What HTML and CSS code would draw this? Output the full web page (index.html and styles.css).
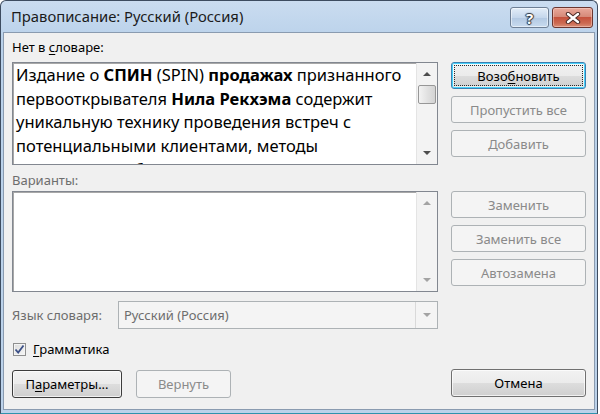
FILE: index.html
```html
<!DOCTYPE html>
<html>
	<head>
		<meta charset="utf-8">
		<title>Правописание: Русский (Россия)</title>
		<link rel="stylesheet" href="styles.css">
	</head>
	<body>
		<div class="window">
			<div class="titlebar">
				<span class="title">Правописание: Русский (Россия)</span>
				<div class="caption_btns">
					<div class="cap cap_help">?</div>
					<div class="cap cap_close">
						<svg width="16" height="12" viewBox="0 0 16 12">
							<path d="M3 2 L13 10 M13 2 L3 10" stroke="#4a2a26" stroke-width="4.4" stroke-linecap="round"/>
							<path d="M3 2 L13 10 M13 2 L3 10" stroke="#ffffff" stroke-width="2.4" stroke-linecap="round"/>
						</svg>
					</div>
				</div>
			</div>
			<div class="dialog">
				<div class="label">Нет в <u>с</u>ловаре:</div>
				<div class="left_col"></div>

				<div class="textbox">
					<div class="text">Издание о <b>СПИН</b> (SPIN) <b>продажах</b> признанного<br>первооткрывателя <b>Нила Рекхэма</b> содержит<br>уникальную технику проведения встреч с<br>потенциальными клиентами, методы<br>правильного общения и другой</div>
					<div class="scroll">
						<div class="arr"><span class="tri_up"></span></div>
						<div class="track"><div class="thumb"></div></div>
						<div class="arr"><span class="tri_down"></span></div>
					</div>
				</div>
				<div class="btn_stack">
					<div class="btn btn_default"><span class="focus">Возо<u>б</u>новить</span></div>
					<div class="btn off">Пропустить все</div>
					<div class="btn off">Добавить</div>
				</div>

				<div class="label dim label_var">Варианты:</div>
				<div class="left_col"></div>

				<div class="listbox">
					<div class="text"></div>
					<div class="scroll">
						<div class="arr"><span class="tri_up off_tri"></span></div>
						<div class="track"></div>
						<div class="arr"><span class="tri_down off_tri"></span></div>
					</div>
				</div>
				<div class="btn_stack">
					<div class="btn off">Заменить</div>
					<div class="btn off">Заменить все</div>
					<div class="btn off">Автозамена</div>
				</div>

				<div class="lang_row">
					<span class="dim lang_label">Язык словаря:</span>
					<div class="combo">
						<span class="combo_text">Русский (Россия)</span>
						<div class="combo_btn"><span class="tri_down off_tri"></span></div>
					</div>
				</div>
				<div class="left_col"></div>

				<div class="check_row">
					<span class="checkbox">
						<svg width="11" height="11" viewBox="0 0 11 11">
							<path d="M1.5 5.5 L4.2 8.6 L9.5 1.5" fill="none" stroke="#3b4f86" stroke-width="1.8"/>
						</svg>
					</span>
					<span><u>Г</u>рамматика</span>
				</div>
				<div class="left_col"></div>

				<div class="foot_left">
					<div class="btn btn_hot btn_params">П<u>а</u>раметры...</div>
					<div class="btn off btn_back">Вернуть</div>
				</div>
				<div class="btn btn_cancel">Отмена</div>
			</div>
		</div>
	</body>
</html>
```

FILE: styles.css
```css
* {
    box-sizing: border-box;
}
body {
    margin: 0;
    background: #ffffff;
    font-family: "Noto Sans", "Open Sans", sans-serif;
    font-size: 13px;
    color: #000000;
}
u {
    text-decoration: underline;
    text-underline-offset: 2px;
}
/* window frame */
.window {
    width: 598px;
    height: 414px;
    display: flex;
    flex-direction: column;
    padding: 0 2px 3px 2px;
    border: 1px solid #3d4c60;
    border-bottom-color: #2f93ad;
    border-radius: 6px 6px 0 0;
    background: linear-gradient(#cadcf0, #b9d1ea 40px, #bcd2ea);
}
.titlebar {
    height: 31px;
    display: flex;
    align-items: center;
    justify-content: space-between;
    padding-left: 8px;
}
.title {
    font-size: 14.8px;
    color: #1b1b1b;
    margin-top: -1px;
}
.caption_btns {
    display: flex;
    gap: 3px;
    align-self: flex-start;
    margin-top: 6px;
    margin-right: 2px;
}
.cap {
    height: 21px;
    border-radius: 3px;
    display: flex;
    align-items: center;
    justify-content: center;
}
.cap_help {
    width: 39px;
    border: 1px solid #6e7f95;
    background: linear-gradient(#e3edf8, #c5d7ec 50%, #b2c8e2 51%, #c8dbef);
    box-shadow: inset 0 0 0 1px rgba(255,255,255,.5);
    color: #ffffff;
    font-weight: bold;
    font-size: 15px;
    text-shadow: 0 0 1px #2d3642, 1px 0 1px #2d3642, -1px 0 1px #2d3642, 0 1px 1px #2d3642, 0 -1px 1px #2d3642;
}
.cap_close {
    width: 41px;
    border: 1px solid #6b3630;
    background: linear-gradient(#e9a99b, #d68a79 45%, #c5523d 50%, #cc6a52 80%, #d98f78);
    box-shadow: inset 0 0 0 1px rgba(255,220,210,.45);
}
/* dialog body */
.dialog {
    flex: 1;
    background: #f0f0f0;
    border: 1px solid #8a9bb0;
    display: grid;
    grid-template-columns: 426px 135px;
    column-gap: 13px;
    align-content: start;
    padding: 6px 0 0 8px;
}
.label {
    height: 16px;
    line-height: 16px;
    margin-bottom: 7px;
}
.dim {
    color: #6d6d6d;
}
.label_var {
    margin-top: 7px;
    margin-bottom: 3px;
}
.textbox, .listbox {
    display: flex;
    background: #ffffff;
    border: 1px solid #828790;
    box-shadow: inset 1px 1px 0 #a8a8a8;
    overflow: hidden;
}
.textbox {
    height: 103px;
}
.listbox {
    height: 101px;
}
.text {
    flex: 1;
    padding: 0 0 0 3px;
    font-size: 16.5px;
    line-height: 23.7px;
    white-space: nowrap;
    overflow: hidden;
}
.text b {
    font-weight: bold;
}
.scroll {
    width: 21px;
    display: flex;
    flex-direction: column;
    background: #f3f3f3;
    border-left: 1px solid #e4e4e4;
}
.arr {
    height: 22px;
    display: flex;
    align-items: center;
    justify-content: center;
}
.track {
    flex: 1;
    padding: 0 1px;
}
.thumb {
    height: 19px;
    border: 1px solid #979797;
    border-radius: 2px;
    background: linear-gradient(90deg, #f3f3f3, #e2e2e2 50%, #d3d3d3);
}
.tri_up, .tri_down {
    width: 0;
    height: 0;
    border-left: 4px solid transparent;
    border-right: 4px solid transparent;
}
.tri_up {
    border-bottom: 4px solid #4d4d4d;
}
.tri_down {
    border-top: 4px solid #4d4d4d;
}
.tri_up.off_tri {
    border-bottom-color: #a3a3a3;
}
.tri_down.off_tri {
    border-top-color: #a3a3a3;
}
/* buttons */
.btn_stack {
    display: flex;
    flex-direction: column;
    gap: 7px;
}
.btn {
    height: 27px;
    display: flex;
    align-items: center;
    justify-content: center;
    border: 1px solid #707070;
    border-radius: 3px;
    background: linear-gradient(#f2f2f2, #ebebeb 50%, #dddddd 51%, #cfcfcf);
    box-shadow: inset 0 0 0 1px rgba(255,255,255,.7);
}
.btn.off {
    color: #8a8a8a;
    border-color: #adb2b5;
    background: #f4f4f4;
    box-shadow: none;
}
.btn_default {
    border-color: #3c7fb1;
    box-shadow: inset 0 0 0 1px #48d2fb, inset 0 0 0 2px rgba(255,255,255,.6);
}
.focus {
    display: flex;
    align-items: center;
    justify-content: center;
    width: calc(100% - 6px);
    height: calc(100% - 6px);
    outline: 1px dotted #2b2b2b;
}
/* language row */
.lang_row {
    margin-top: 9px;
    display: flex;
    align-items: center;
}
.lang_label {
    width: 106px;
}
.combo {
    flex: 1;
    height: 28px;
    display: flex;
    align-items: center;
    border: 1px solid #adb2b5;
    background: #f4f4f4;
}
.combo_text {
    flex: 1;
    padding-left: 5px;
    color: #6d6d6d;
}
.combo_btn {
    width: 22px;
    align-self: stretch;
    display: flex;
    align-items: center;
    justify-content: center;
    border-left: 1px solid #d9d9d9;
}
/* checkbox */
.check_row {
    margin-top: 12px;
    height: 16px;
    display: flex;
    align-items: center;
    gap: 7px;
    padding-left: 1px;
}
.checkbox {
    width: 13px;
    height: 13px;
    border: 1px solid #8f8f8f;
    background: linear-gradient(135deg, #dcdcdc, #f6f6f6);
    box-shadow: inset 0 0 0 1px #f4f4f4;
    display: flex;
    align-items: center;
    justify-content: center;
}
/* footer */
.foot_left {
    margin-top: 13px;
    display: flex;
    gap: 14px;
}
.btn_params {
    width: 110px;
    height: 28px;
    border-color: #3c3c3c;
}
.btn_back {
    width: 95px;
    height: 28px;
}
.btn_cancel {
    margin-top: 12px;
    height: 28px;
}
```
